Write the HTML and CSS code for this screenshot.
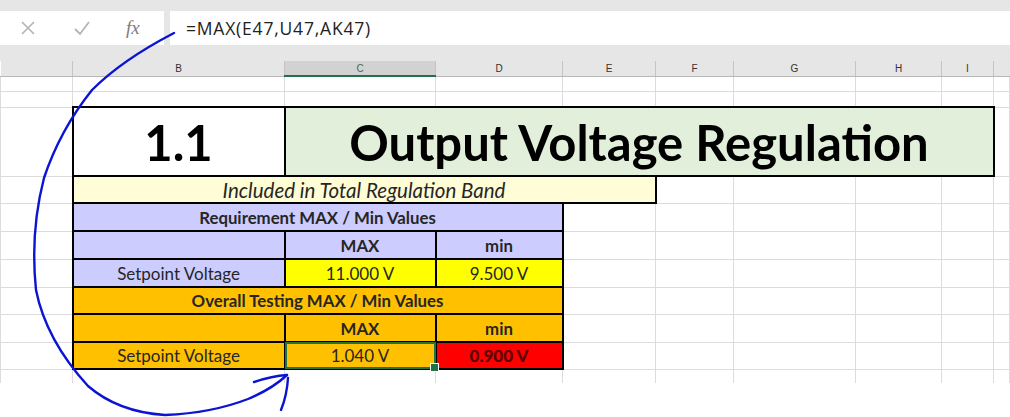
FILE: index.html
```html
<!DOCTYPE html>
<html>
<head>
    <meta charset='utf-8'>
    <title>Output Voltage Regulation</title>
    <link rel="stylesheet" href="styles.css">
</head>
<body>
    <div class="topbar">
        <div class="namebox">
            <svg class="btn-x" width="16" height="16" viewBox="0 0 16 16">
                <path d="M2 2 L14 14 M14 2 L2 14" stroke="#b4b4b4" stroke-width="1.6" fill="none"/>
            </svg>
            <svg class="btn-ok" width="18" height="16" viewBox="0 0 18 16">
                <path d="M2 9 L7 14 L16 2" stroke="#b4b4b4" stroke-width="1.8" fill="none"/>
            </svg>
            <span class="fx">fx</span>
        </div>
        <div class="formula">=MAX(E47,U47,AK47)</div>
    </div>
    <div class="strip"></div>

    <table class="sheet">
        <colgroup>
            <col class="c-a">
            <col class="c-b">
            <col class="c-c">
            <col class="c-d">
            <col class="c-e">
            <col class="c-f">
            <col class="c-g">
            <col class="c-h">
            <col class="c-i">
            <col>
        </colgroup>
        <tr class="hdr">
            <th class="first"></th>
            <th>B</th>
            <th class="active">C</th>
            <th>D</th>
            <th>E</th>
            <th>F</th>
            <th>G</th>
            <th>H</th>
            <th>I</th>
            <th></th>
        </tr>
        <tr class="r15">
            <td></td><td></td><td></td><td></td><td></td><td></td><td></td><td></td><td></td><td></td>
        </tr>
        <tr class="r16">
            <td></td><td></td><td></td><td></td><td></td><td></td><td></td><td></td><td></td><td></td>
        </tr>
        <tr class="r-title">
            <td></td>
            <td class="box big white">1.1</td>
            <td class="box big green" colspan="7">Output Voltage Regulation</td>
            <td></td>
        </tr>
        <tr class="r27">
            <td></td>
            <td class="box note" colspan="4">Included in Total Regulation Band</td>
            <td></td><td></td><td></td><td></td><td></td>
        </tr>
        <tr class="r28">
            <td></td>
            <td class="box lav b" colspan="3">Requirement MAX / Min Values</td>
            <td></td><td></td><td></td><td></td><td></td><td></td>
        </tr>
        <tr class="r28">
            <td></td>
            <td class="box lav"></td>
            <td class="box lav b">MAX</td>
            <td class="box lav b">min</td>
            <td></td><td></td><td></td><td></td><td></td><td></td>
        </tr>
        <tr class="r28">
            <td></td>
            <td class="box lav">Setpoint Voltage</td>
            <td class="box yel">11.000 V</td>
            <td class="box yel">9.500 V</td>
            <td></td><td></td><td></td><td></td><td></td><td></td>
        </tr>
        <tr class="r27">
            <td></td>
            <td class="box org b" colspan="3">Overall Testing MAX / Min Values</td>
            <td></td><td></td><td></td><td></td><td></td><td></td>
        </tr>
        <tr class="r28">
            <td></td>
            <td class="box org"></td>
            <td class="box org b">MAX</td>
            <td class="box org b">min</td>
            <td></td><td></td><td></td><td></td><td></td><td></td>
        </tr>
        <tr class="r27">
            <td></td>
            <td class="box org">Setpoint Voltage</td>
            <td class="box org sel">1.040 V</td>
            <td class="box fail">0.900 V</td>
            <td></td><td></td><td></td><td></td><td></td><td></td>
        </tr>
        <tr class="r14 last">
            <td></td><td></td><td></td><td></td><td></td><td></td><td></td><td></td><td></td><td></td>
        </tr>
    </table>

    <!-- hand drawn annotation over the sheet -->
    <svg class="ink" width="1010" height="417" viewBox="0 0 1010 417">
        <g stroke="#0a14d2" stroke-width="2.4" fill="none" stroke-linecap="round" stroke-linejoin="round">
            <path d="M174 33 Q122 60 92 90 Q60 130 44 178 Q30 232 36 290 Q46 340 88 386 Q118 412 165 415 Q212 413 248 399 Q272 389 287 375"/>
            <path d="M254 382 Q272 376 287 375"/>
            <path d="M288 378 Q287 395 281 410"/>
        </g>
    </svg>
</body>
</html>
```

FILE: styles.css
```css
* {
    box-sizing: border-box;
}
body {
    margin: 0;
    width: 1010px;
    height: 417px;
    overflow: hidden;
    position: relative;
    background: #fff;
    font-family: Lato, sans-serif;
}

/* formula bar */
.topbar {
    display: flex;
    gap: 6px;
    height: 45px;
    padding-top: 11px;
    background: #e6e6e6;
}

.namebox {
    width: 164px;
    background: #fff;
    display: flex;
    align-items: center;
}

.btn-x {
    margin-left: 20px;
}

.btn-ok {
    margin-left: 37px;
}

.fx {
    margin-left: 35px;
    font-family: "Liberation Serif", serif;
    font-style: italic;
    font-size: 19px;
    color: #7c7c7c;
}

.formula {
    flex: 1;
    background: #fff;
    padding-left: 16px;
    font-family: "Open Sans", sans-serif;
    font-size: 17.5px;
    letter-spacing: 0.8px;
    line-height: 34px;
    color: #222;
}

.strip {
    height: 16px;
    background: #e6e6e6;
}

/* sheet grid */
.sheet {
    border-collapse: collapse;
    table-layout: fixed;
    width: 1010px;
}

.c-a { width: 72px; }
.c-b { width: 212px; }
.c-c { width: 151px; }
.c-d { width: 127px; }
.c-e { width: 93px; }
.c-f { width: 78px; }
.c-g { width: 122px; }
.c-h { width: 86px; }
.c-i { width: 52px; }

.hdr th {
    height: 15px;
    padding: 0;
    background: #e6e6e6;
    border-left: 1px solid #c4c4c4;
    border-bottom: 1px solid #b8b8b8;
    font-family: "Liberation Sans", sans-serif;
    font-size: 10px;
    font-weight: normal;
    color: #333;
}

.hdr th.first {
    border-left: none;
}

.hdr th.active {
    background: #d2d2d2;
    border-bottom: 2px solid #217346;
    color: #3b6e4e;
}

.sheet td {
    padding: 0;
    border: 1px solid #dcdcdc;
    text-align: center;
    white-space: nowrap;
    overflow: hidden;
    font-size: 17px;
    color: #262626;
}

.r14 { height: 14px; }
.r15 { height: 15px; }
.r16 { height: 16px; }
.r27 { height: 27px; }
.r28 { height: 28px; }
.r-title { height: 69px; }

.sheet .last td {
    border-bottom: none;
}

/* report block */
.sheet td.box {
    border: 2px solid #000;
}

.sheet td.big {
    font-size: 49px;
    font-weight: bold;
    color: #000;
}

.white { background: #fff; }
.green { background: #e2efda; }

.sheet td.note {
    background: #fffdd5;
    font-style: italic;
    font-size: 20.5px;
}

.lav { background: #ccccff; }
.yel { background: #ffff00; }
.org { background: #ffc000; }

.sheet td.fail {
    background: #ff0000;
    color: #5e0000;
    font-weight: 900;
}

.sheet td.b {
    font-weight: bold;
    font-size: 16.8px;
}

.sheet td.sel {
    position: relative;
    overflow: visible;
    outline: 2px solid #217346;
    outline-offset: -2px;
    box-shadow: inset 0 0 0 1px #fff;
}

.sel::after {
    content: "";
    position: absolute;
    right: -4px;
    bottom: -4px;
    width: 7px;
    height: 7px;
    background: #217346;
    border: 1px solid #fff;
}

.ink {
    position: absolute;
    top: 0;
    left: 0;
    pointer-events: none;
}
```
